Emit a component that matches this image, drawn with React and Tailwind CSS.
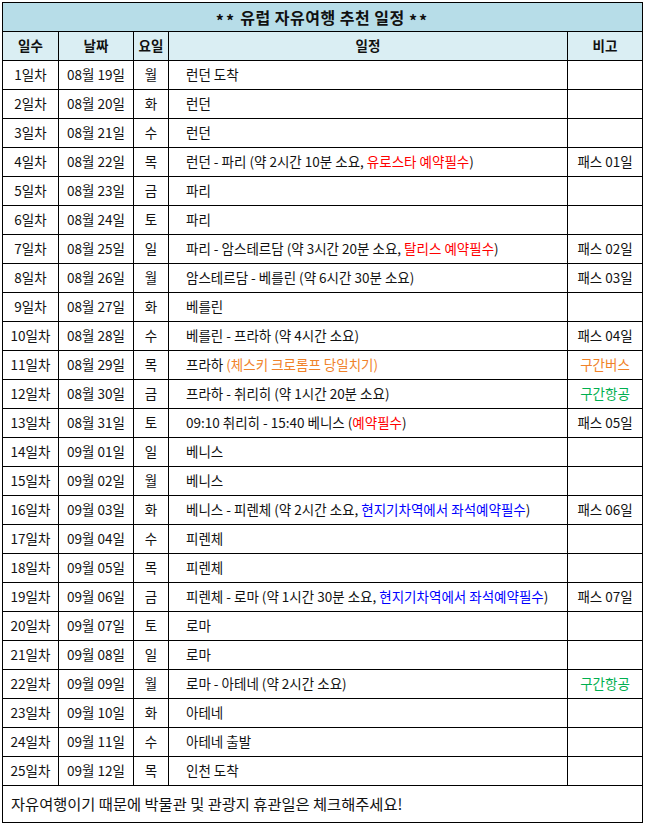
import React from 'react';

const FONT = { fontFamily: '"Noto Sans CJK KR", "Noto Sans", sans-serif' };

const red = 'text-[#ff0000]';
const orange = 'text-[#f0822a]';
const green = 'text-[#00b050]';
const blue = 'text-[#0000ff]';

// 일정 데이터
const rows = [
  ['08월 19일', '월', <>런던 도착</>, null],
  ['08월 20일', '화', <>런던</>, null],
  ['08월 21일', '수', <>런던</>, null],
  ['08월 22일', '목', <>런던 - 파리 (약 2시간 10분 소요, <span className={red}>유로스타 예약필수</span>)</>, <>패스 01일</>],
  ['08월 23일', '금', <>파리</>, null],
  ['08월 24일', '토', <>파리</>, null],
  ['08월 25일', '일', <>파리 - 암스테르담 (약 3시간 20분 소요, <span className={red}>탈리스 예약필수</span>)</>, <>패스 02일</>],
  ['08월 26일', '월', <>암스테르담 - 베를린 (약 6시간 30분 소요)</>, <>패스 03일</>],
  ['08월 27일', '화', <>베를린</>, null],
  ['08월 28일', '수', <>베를린 - 프라하 (약 4시간 소요)</>, <>패스 04일</>],
  ['08월 29일', '목', <>프라하 <span className={orange}>(체스키 크로롬프 당일치기)</span></>, <span className={orange}>구간버스</span>],
  ['08월 30일', '금', <>프라하 - 취리히 (약 1시간 20분 소요)</>, <span className={green}>구간항공</span>],
  ['08월 31일', '토', <>09:10 취리히 - 15:40 베니스 (<span className={red}>예약필수</span>)</>, <>패스 05일</>],
  ['09월 01일', '일', <>베니스</>, null],
  ['09월 02일', '월', <>베니스</>, null],
  ['09월 03일', '화', <>베니스 - 피렌체 (약 2시간 소요, <span className={blue}>현지기차역에서 좌석예약필수</span>)</>, <>패스 06일</>],
  ['09월 04일', '수', <>피렌체</>, null],
  ['09월 05일', '목', <>피렌체</>, null],
  ['09월 06일', '금', <>피렌체 - 로마 (약 1시간 30분 소요, <span className={blue}>현지기차역에서 좌석예약필수</span>)</>, <>패스 07일</>],
  ['09월 07일', '토', <>로마</>, null],
  ['09월 08일', '일', <>로마</>, null],
  ['09월 09일', '월', <>로마 - 아테네 (약 2시간 소요)</>, <span className={green}>구간항공</span>],
  ['09월 10일', '화', <>아테네</>, null],
  ['09월 11일', '수', <>아테네 출발</>, null],
  ['09월 12일', '목', <>인천 도착</>, null],
];

export default function App() {
  const cell = 'border border-black p-0 h-[29px] leading-none';
  return (
    <div className="bg-white min-h-[831px] pt-[2px] pl-[2px] text-[#111]" style={FONT}>
      <table className="table-fixed border-collapse w-[640px] text-[13.5px]">
        <colgroup>
          <col className="w-[56px]" />
          <col className="w-[75px]" />
          <col className="w-[35px]" />
          <col className="w-[399px]" />
          <col className="w-[75px]" />
        </colgroup>
        <thead>
          <tr>
            <th colSpan={5} className={`${cell} bg-[#b7dde8] text-[16px] tracking-[0.5px] font-bold text-center`}>
              <span className="relative top-[3px] tracking-[2px]">**</span> 유럽 자유여행 추천 일정 <span className="relative top-[3px] tracking-[2px]">**</span>
            </th>
          </tr>
          <tr className="bg-[#daeef3] font-bold">
            <th className={`${cell} text-center`}>일수</th>
            <th className={`${cell} text-center`}>날짜</th>
            <th className={`${cell} text-center`}>요일</th>
            <th className={`${cell} text-center`}>일정</th>
            <th className={`${cell} text-center`}>비고</th>
          </tr>
        </thead>
        <tbody>
          {rows.map((r, i) => (
            <tr key={i}>
              <td className={`${cell} text-center`}>{i + 1}일차</td>
              <td className={`${cell} text-center`}>{r[0]}</td>
              <td className={`${cell} text-center`}>{r[1]}</td>
              <td className={`${cell} pl-[17px] whitespace-nowrap`}>{r[2]}</td>
              <td className={`${cell} text-center`}>{r[3]}</td>
            </tr>
          ))}
          <tr>
            <td colSpan={5} className="border border-black h-[37px] pl-[8px] text-[15.3px] leading-none">
              자유여행이기 때문에 박물관 및 관광지 휴관일은 체크해주세요!
            </td>
          </tr>
        </tbody>
      </table>
    </div>
  );
}
